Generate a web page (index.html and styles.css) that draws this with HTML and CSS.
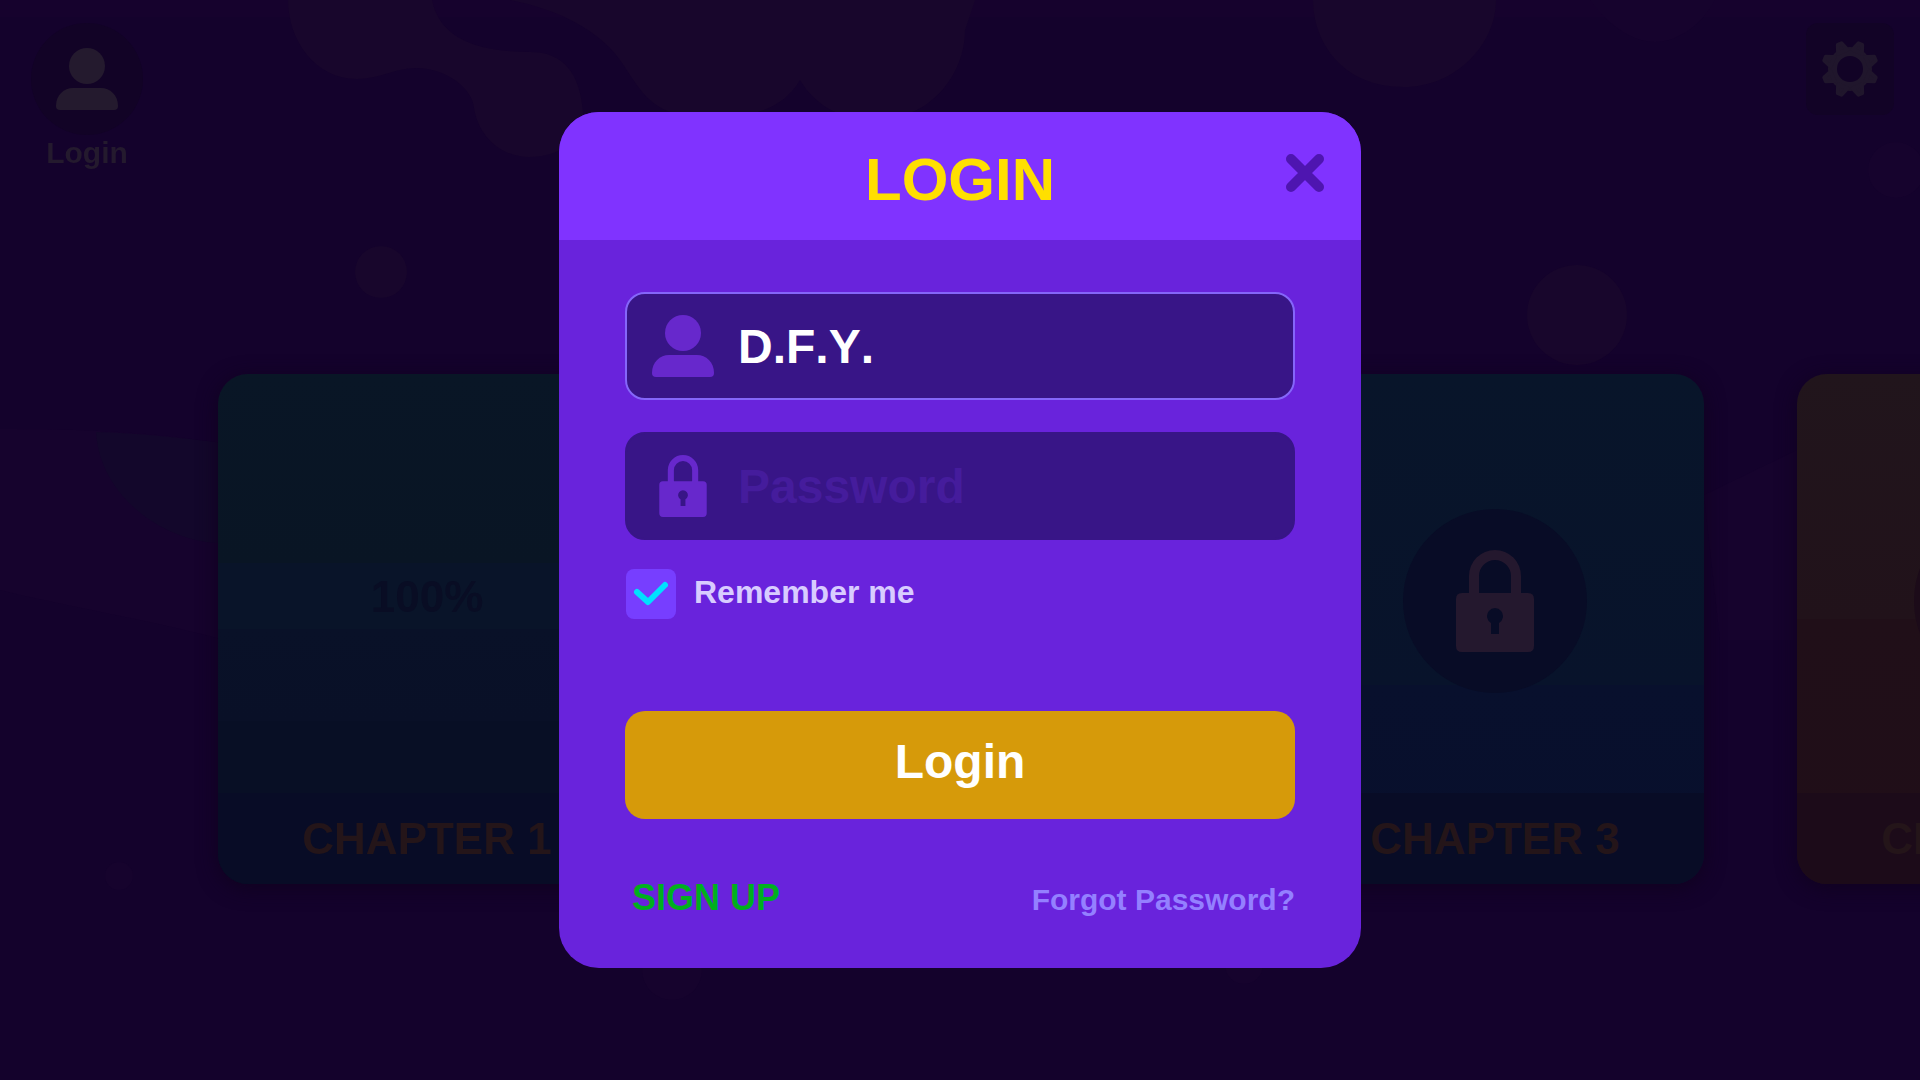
FILE: index.html
```html
<!DOCTYPE html>
<html lang="en">
<head>
<meta charset="utf-8">
<meta name="viewport" content="width=device-width, initial-scale=1">
<title>Login</title>
<link rel="stylesheet" href="styles.css">
</head>
<body>
<svg class="backdrop" viewBox="0 0 1920 1080" preserveAspectRatio="xMidYMid slice" aria-hidden="true">
  <rect class="sky" width="1920" height="17"/>
  <g class="blob">
    <path d="M288 0C288 40 315 79 357 79C380 79 395 68 416 68C448 68 473 90 474 108C478 135 500 157 529 157C560 157 583 140 583 112C580 75 565 52 530 52C480 52 440 40 432 0Z"/>
    <path d="M510 0C560 10 590 28 610 48C640 80 640 118 710 118C760 118 785 105 800 80C815 105 840 120 875 120C930 120 965 75 965 30L975 0Z"/>
    <path d="M1313 0C1313 40 1340 87 1404 87C1455 87 1496 45 1496 0Z"/>
    <circle cx="381" cy="272" r="26"/>
    <circle cx="1577" cy="315" r="50"/>
  </g>
  <g class="blob-faint">
    <path d="M1590 0C1610 28 1635 42 1655 42C1675 42 1700 28 1715 0Z"/>
    <circle cx="1896" cy="170" r="28"/>
    <circle cx="119" cy="876" r="14"/>
    <circle cx="672" cy="970" r="30"/>
    <circle cx="1244" cy="965" r="19"/>
    <path d="M0 429C80 429 160 432 225 444V640C150 620 60 605 0 590Z"/>
    <path d="M1704 495L1797 450V640H1720Z"/>
  </g>
  <path class="ridge" d="M96 432C140 433 180 438 225 443V543C170 545 100 500 96 432Z"/>
</svg>

<div class="screen">
  <header class="topbar">
    <button class="account" type="button">
      <span class="avatar">
        <svg viewBox="0 0 62 62" aria-hidden="true"><circle cx="31" cy="18" r="18"/><path d="M0 58C0 47 8 40 17 40H45C54 40 62 47 62 58Q62 62 58 62H4Q0 62 0 58Z"/></svg>
      </span>
      <span>Login</span>
    </button>
    <button class="settings" type="button" aria-label="Settings">
      <svg viewBox="-30 -30 60 60" aria-hidden="true">
        <circle class="gear-ring" r="17.5"/>
        <g class="gear-teeth">
          <path transform="rotate(22.5)" d="M-5 -19L-2 -27H2L5 -19Z"/>
          <path transform="rotate(67.5)" d="M-5 -19L-2 -27H2L5 -19Z"/>
          <path transform="rotate(112.5)" d="M-5 -19L-2 -27H2L5 -19Z"/>
          <path transform="rotate(157.5)" d="M-5 -19L-2 -27H2L5 -19Z"/>
          <path transform="rotate(202.5)" d="M-5 -19L-2 -27H2L5 -19Z"/>
          <path transform="rotate(247.5)" d="M-5 -19L-2 -27H2L5 -19Z"/>
          <path transform="rotate(292.5)" d="M-5 -19L-2 -27H2L5 -19Z"/>
          <path transform="rotate(337.5)" d="M-5 -19L-2 -27H2L5 -19Z"/>
        </g>
      </svg>
    </button>
  </header>

  <main class="chapters">
    <article class="card card-one">
      <div class="card-art"><span class="progress">100%</span></div>
      <h2 class="card-title">CHAPTER 1</h2>
    </article>
    <article class="card card-current"></article>
    <article class="card card-three">
      <div class="card-art">
        <span class="locked">
          <svg viewBox="0 0 78 102" aria-hidden="true"><path fill-rule="evenodd" d="M13 43V26A26 26 0 0 1 65 26V43H72Q78 43 78 49V96Q78 102 72 102H6Q0 102 0 96V49Q0 43 6 43ZM23 43H55V26A16 16 0 0 0 23 26ZM35 73V84H43V73A8 8 0 1 0 35 73Z"/></svg>
        </span>
      </div>
      <h2 class="card-title">CHAPTER 3</h2>
    </article>
    <article class="card card-four">
      <div class="card-art"><span class="locked"></span></div>
      <h2 class="card-title">CHAPTER 4</h2>
    </article>
  </main>
</div>

<div class="overlay">
  <section class="modal" role="dialog" aria-labelledby="modal-title">
    <header class="modal-header">
      <h1 id="modal-title">LOGIN</h1>
      <button class="close" type="button" aria-label="Close">
        <svg viewBox="0 0 40 40" aria-hidden="true"><path d="M6 6L34 34M34 6L6 34"/></svg>
      </button>
    </header>
    <form class="modal-body">
      <div class="field field-active">
        <svg class="field-icon" viewBox="0 0 62 62" aria-hidden="true"><circle cx="31" cy="18" r="18"/><path d="M0 58C0 47 8 40 17 40H45C54 40 62 47 62 58Q62 62 58 62H4Q0 62 0 58Z"/></svg>
        <input type="text" value="D.F.Y." aria-label="Username">
      </div>
      <div class="field">
        <svg class="field-icon" viewBox="-11 0 100 102" aria-hidden="true"><path fill-rule="evenodd" d="M14 43V25A25 25 0 0 1 64 25V43H72Q78 43 78 49V96Q78 102 72 102H6Q0 102 0 96V49Q0 43 6 43ZM24 43H54V25A15 15 0 0 0 24 25ZM35 73V84H43V73A8 8 0 1 0 35 73Z"/></svg>
        <input type="password" placeholder="Password" aria-label="Password">
      </div>
      <div class="remember">
        <span class="tick">
          <input type="checkbox" id="remember" checked>
          <svg viewBox="0 0 50 50" aria-hidden="true"><path d="M11 23L22 33L39 16"/></svg>
        </span>
        <label for="remember">Remember me</label>
      </div>
      <button class="submit" type="submit">Login</button>
      <div class="links">
        <a class="signup" href="#signup">SIGN UP</a>
        <a class="forgot" href="#forgot">Forgot Password?</a>
      </div>
    </form>
  </section>
</div>
</body>
</html>
```
FILE: styles.css
```css
*, *::before, *::after { box-sizing: border-box; }

body {
  margin: 0;
  min-height: 100vh;
  background: #14022c;
  color: #241a2e;
  font-family: "Arial Rounded MT Bold", "Liberation Sans", Arial, sans-serif;
  font-weight: 700;
  font-kerning: none;
}

button, input {
  margin: 0;
  padding: 0;
  border: 0;
  background: none;
  color: inherit;
  font: inherit;
  font-kerning: none;
}

button { cursor: pointer; }
h1, h2 { margin: 0; font-weight: 700; }
a { text-decoration: none; }
svg { display: block; }

/* Backdrop */
.backdrop {
  position: fixed;
  inset: 0;
  width: 100%;
  height: 100%;
}
.sky { fill: #16022d; }
.blob { fill: #18062c; }
.blob-faint { fill: #16032d; }
.ridge { fill: #13072b; }

/* Chapter screen */
.screen {
  position: relative;
  min-height: 100vh;
  overflow: clip;
}

.topbar {
  display: flex;
  justify-content: space-between;
  align-items: flex-start;
  padding: 23px 26px 0 31px;
}

.account {
  display: flex;
  flex-direction: column;
  align-items: center;
  font-size: 30px;
  line-height: 36px;
}

.avatar {
  display: grid;
  place-items: center;
  width: 112px;
  height: 112px;
  border-radius: 50%;
  background: #120326;
}
.avatar svg { width: 62px; fill: #241a2e; }

.settings {
  display: grid;
  place-items: center;
  width: 88px;
  height: 92px;
  border-radius: 12px;
  background: #120326;
}
.settings svg { width: 60px; }
.gear-ring { fill: none; stroke: #20162c; stroke-width: 9; }
.gear-teeth { fill: #20162c; stroke: #20162c; stroke-width: 4; stroke-linejoin: round; }

.chapters {
  display: flex;
  align-items: center;
  gap: 93px;
  padding-top: 203px;
  padding-left: max(0px, calc(50% - 742px));
}

.card {
  display: flex;
  flex: none;
  flex-direction: column;
  width: 418px;
  height: 510px;
  border-radius: 30px;
  overflow: hidden;
  box-shadow: 0 4px 20px #10021f;
}
.card-one { background: linear-gradient(#091626, #091524 37%, #091429 37%, #091429 50%, #091128 50%, #091027 68%, #080f25 68%); }
.card-current { width: 464px; background: #091027; }
.card-three { background: linear-gradient(#08152a, #08132b 61%, #08102d 61%, #080f2c); }
.card-four { background: linear-gradient(#21151c, #21121a 48%, #200f18 48%, #200e18); }

.card-art {
  display: grid;
  flex: 1;
  place-items: center;
  padding-top: 34px;
}

.progress {
  padding-bottom: 8px;
  color: #090d24;
  font-size: 44px;
  line-height: 48px;
}

.locked {
  display: grid;
  place-items: center;
  width: 184px;
  height: 184px;
  border-radius: 50%;
  background: #080c26;
}
.locked svg { width: 78px; fill: #24182e; }
.card-four .locked { background: #1c0b19; }

.card-title {
  height: 91px;
  background: #080c26;
  color: #241519;
  font-size: 44px;
  line-height: 91px;
  text-align: center;
}
.card-four .card-title { background: #1c0b19; color: #241519; }

/* Login dialog */
.overlay {
  position: fixed;
  inset: 0;
  display: grid;
  place-items: center;
}

.modal {
  width: min(802px, 100%);
  border-radius: 40px;
  overflow: hidden;
  background: #6923dc;
}

.modal-header {
  display: grid;
  grid-template-columns: 40px 1fr 40px;
  align-items: center;
  height: 128px;
  padding: 0 36px;
  background: #8033ff;
}
.modal-header h1 {
  grid-column: 2;
  padding-top: 8px;
  color: #ffdf00;
  font-size: 60px;
  line-height: 64px;
  text-align: center;
}

.close { padding-bottom: 6px; }
.close svg {
  width: 40px;
  fill: none;
  stroke: #4e15b0;
  stroke-width: 10;
  stroke-linecap: round;
}

.modal-body { padding: 52px 66px 48px; }

.field {
  display: flex;
  align-items: center;
  gap: 24px;
  height: 108px;
  padding: 0 25px;
  border: 2px solid #381587;
  border-radius: 20px;
  background: #381587;
}
.field + .field { margin-top: 32px; }
.field-active { border-color: #8566fa; }

.field-icon {
  flex: none;
  width: 62px;
  height: 62px;
  fill: #6728cc;
}

.field input {
  flex: 1;
  min-width: 0;
  height: 64px;
  outline: 0;
  color: #fff;
  font-size: 48px;
}
.field input::placeholder { color: #451c9c; opacity: 1; }

.remember {
  display: flex;
  align-items: center;
  gap: 18px;
  height: 50px;
  margin-top: 29px;
  margin-left: 1px;
}
.remember label {
  padding-bottom: 4px;
  color: #d8ccff;
  font-size: 32px;
  line-height: 36px;
}

.tick { display: grid; width: 50px; height: 50px; }
.tick input, .tick svg { grid-area: 1 / 1; width: 50px; height: 50px; }
.tick input {
  appearance: none;
  border-radius: 8px;
  background: #773eff;
}
.tick svg {
  z-index: 1;
  fill: none;
  stroke: #00e1ff;
  stroke-width: 6;
  stroke-linecap: round;
  stroke-linejoin: round;
  pointer-events: none;
}
.tick input:not(:checked) + svg { display: none; }

.submit {
  width: 100%;
  height: 108px;
  margin-top: 92px;
  padding-bottom: 8px;
  border-radius: 20px;
  background: #d69a0a;
  color: #fff;
  font-size: 48px;
}

.links {
  display: flex;
  justify-content: space-between;
  align-items: baseline;
  padding: 59px 0 0 7px;
  line-height: 40px;
}
.signup { color: #00b01e; font-size: 36px; }
.forgot { color: #9480ff; font-size: 30px; }
```
